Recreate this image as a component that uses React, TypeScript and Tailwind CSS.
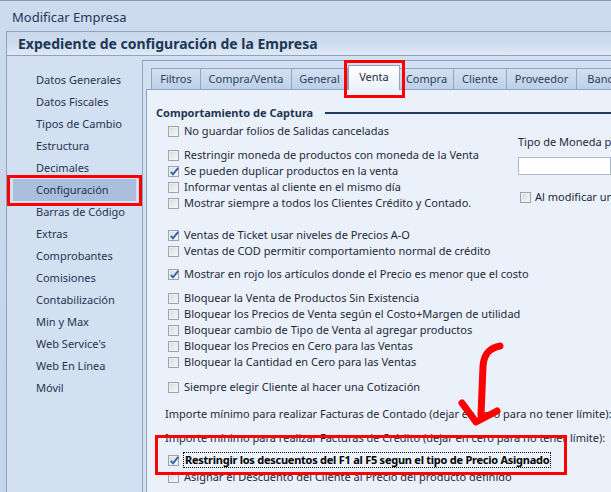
import React from "react";

const Check = ({ checked }: { checked?: boolean }) => (
  <span className="relative w-[11px] h-[11px] shrink-0 border border-[#9ea4ac] bg-gradient-to-br from-[#d6d9dd] to-[#f8f8f8] shadow-[inset_0_0_0_1px_#eef0f3]">
    {checked && (
      <svg className="absolute left-[0px] top-[-1px]" width="11" height="11" viewBox="0 0 11 11">
        <path d="M1.8 5.8 L4 8.3 L9.2 1.8" fill="none" stroke="#2f62ad" strokeWidth="1.9" />
      </svg>
    )}
  </span>
);

type RowProps = {
  label: string;
  checked?: boolean;
  className?: string;
  bold?: boolean;
};

const Row = ({ label, checked, className = "", bold }: RowProps) => (
  <div className={`flex items-center h-[16px] pl-[21px] whitespace-nowrap ${className}`}>
    <Check checked={checked} />
    {bold ? (
      <span className="ml-[4px] px-[1px] font-bold tracking-[-0.25px] text-black border border-dotted border-black leading-[14px]">{label}</span>
    ) : (
      <span className="ml-[5px]">{label}</span>
    )}
  </div>
);

const navItems = [
  "Datos Generales",
  "Datos Fiscales",
  "Tipos de Cambio",
  "Estructura",
  "Decimales",
  "Configuración",
  "Barras de Código",
  "Extras",
  "Comprobantes",
  "Comisiones",
  "Contabilización",
  "Min y Max",
  "Web Service's",
  "Web En Línea",
  "Móvil",
];

const tabs: { label: string; w: string; selected?: boolean }[] = [
  { label: "Filtros", w: "w-[50px]" },
  { label: "Compra/Venta", w: "w-[92px]" },
  { label: "General", w: "w-[57px]" },
  { label: "Venta", w: "w-[52px]", selected: true },
  { label: "Compra", w: "w-[55px]" },
  { label: "Cliente", w: "w-[54px]" },
  { label: "Proveedor", w: "w-[71px]" },
  { label: "Bancos", w: "w-[60px]" },
];

export default function App() {
  return (
    <div className="relative w-[611px] h-[492px] overflow-hidden flex flex-col bg-gradient-to-b from-[#cddbee] to-[#c4d4e9] border-t border-[#8b9bb1] font-['Noto_Sans',sans-serif] text-[11px]">
      {/* Title bar */}
      <div className="h-[30px] shrink-0 flex items-center pl-[12px] pt-[3px] text-[13px] text-[#1d3758]">
        Modificar Empresa
      </div>

      {/* Main panel */}
      <div className="flex-1 min-h-0 ml-[6px] flex flex-col border-l border-t border-[#8ea3bf]">
        <div className="h-[24px] shrink-0 flex items-center pl-[11px] border-b border-[#8ea3bf] bg-gradient-to-b from-[#c9d8ec] via-[#d0ddef] to-[#dfe8f5] text-[14px] font-bold text-[#1d3655]">
          Expediente de configuración de la Empresa
        </div>

        <div className="flex-1 min-h-0 flex bg-[#d3e0f1]">
          {/* Nav */}
          <div className="w-[135px] shrink-0 pt-[13px] text-[#1e3452]">
            {navItems.map((n) =>
              n === "Configuración" ? (
                <div key={n} className="h-[22px] flex items-center mx-[6px] pl-[23px] bg-[#a9bfdc]">
                  {n}
                </div>
              ) : (
                <div key={n} className="h-[22px] flex items-center pl-[29px]">
                  {n}
                </div>
              )
            )}
          </div>

          {/* Content */}
          <div className="flex-1 min-w-0 mt-[4px] border-l border-t border-[#8ea3bf] flex flex-col pl-[3px]">
            {/* Tabs */}
            <div className="h-[24px] mt-[4px] shrink-0 flex items-end pl-[5px]">
              {tabs.map((t) =>
                t.selected ? (
                  <div
                    key={t.label}
                    className={`${t.w} h-[25px] -mb-px relative z-10 shrink-0 flex items-start justify-center pt-[3px] border border-b-0 border-[#8ea3bf] bg-gradient-to-b from-[#ffffff] to-[#eaf1fa] text-[#1d2c40]`}
                  >
                    {t.label}
                  </div>
                ) : (
                  <div
                    key={t.label}
                    className={`${t.w} h-[21px] shrink-0 flex items-center justify-center -ml-px first:ml-0 border border-b-0 border-[#8fa7c6] bg-gradient-to-b from-[#d3e0f1] to-[#bdd0e8] text-[#2d4060] whitespace-nowrap overflow-hidden`}
                  >
                    {t.label}
                  </div>
                )
              )}
            </div>

            {/* Tab page */}
            <div className="flex-1 min-h-0 overflow-hidden border-l border-t border-[#8ea3bf] bg-[#eaf1fa] text-[#1c293a]">
              <div className="mt-[15px] h-[16px] flex items-center pl-[9px]">
                <span className="font-bold text-[#1d3655] whitespace-nowrap">Comportamiento de Captura</span>
                <div className="flex-1 h-[2px] ml-[12px] bg-[#1e3a5f]" />
              </div>

              <div className="mt-[2px] flex">
                <div className="w-[371px] shrink-0">
                  <Row label="No guardar folios de Salidas canceladas" />
                  <Row className="mt-[8px]" label="Restringir moneda de productos con moneda de la Venta" />
                  <Row label="Se pueden duplicar productos en la venta" checked />
                  <Row label="Informar ventas al cliente en el mismo día" />
                  <Row label="Mostrar siempre a todos los Clientes Crédito y Contado." />
                </div>
                <div className="flex-1 min-w-0 whitespace-nowrap">
                  <div className="mt-[11px] h-[16px] flex items-center">Tipo de Moneda para la Venta</div>
                  <div className="mt-[7px] h-[18px] bg-white border border-[#a9b9cf]" />
                  <div className="mt-[14px] h-[16px] flex items-center pl-[2px]">
                    <Check />
                    <span className="ml-[4px]">Al modificar un precio</span>
                  </div>
                </div>
              </div>

              <Row className="mt-[16px]" label="Ventas de Ticket usar niveles de Precios A-O" checked />
              <Row label="Ventas de COD permitir comportamiento normal de crédito" />
              <Row className="mt-[7px]" label="Mostrar en rojo los artículos donde el Precio es menor que el costo" checked />
              <Row className="mt-[8px]" label="Bloquear la Venta de Productos Sin Existencia" />
              <Row label="Bloquear los Precios de Venta según el Costo+Margen de utilidad" />
              <Row label="Bloquear cambio de Tipo de Venta al agregar productos" />
              <Row label="Bloquear los Precios en Cero para las Ventas" />
              <Row label="Bloquear la Cantidad en Cero para las Ventas" />
              <Row className="mt-[9px]" label="Siempre elegir Cliente al hacer una Cotización" />

              <div className="mt-[11px] h-[16px] flex items-center pl-[18px] whitespace-nowrap">
                Importe mínimo para realizar Facturas de Contado (dejar en cero para no tener límite):
              </div>
              <div className="mt-[8px] h-[16px] flex items-center pl-[18px] whitespace-nowrap">
                Importe mínimo para realizar Facturas de Crédito (dejar en cero para no tener límite):
              </div>
              <Row className="mt-[6px]" label="Restringir los descuentos del F1 al F5 segun el tipo de Precio Asignado" checked bold />
              <Row className="mt-[1px]" label="Asignar el Descuento del Cliente al Precio del producto definido" />
            </div>
          </div>
        </div>
      </div>

      {/* Annotations */}
      <div className="absolute left-[7px] top-[174px] w-[135px] h-[31px] border-[3px] border-[#ff0000] pointer-events-none" />
      <div className="absolute left-[344px] top-[59px] w-[61px] h-[38px] border-[3px] border-[#ff0000] pointer-events-none" />
      <div className="absolute left-[155px] top-[434px] w-[412px] h-[40px] border-[3px] border-[#ff0000] pointer-events-none" />
      <svg className="absolute left-0 top-0 pointer-events-none" width="611" height="492" viewBox="0 0 611 492">
        <path d="M500 345 C 490 347, 484 352, 483 365 L 481 414" fill="none" stroke="#ff0000" strokeWidth="7" strokeLinecap="round" strokeLinejoin="round" />
        <path d="M462 402 L 476 421 L 497 410" fill="none" stroke="#ff0000" strokeWidth="7" strokeLinecap="round" strokeLinejoin="round" />
      </svg>
    </div>
  );
}
